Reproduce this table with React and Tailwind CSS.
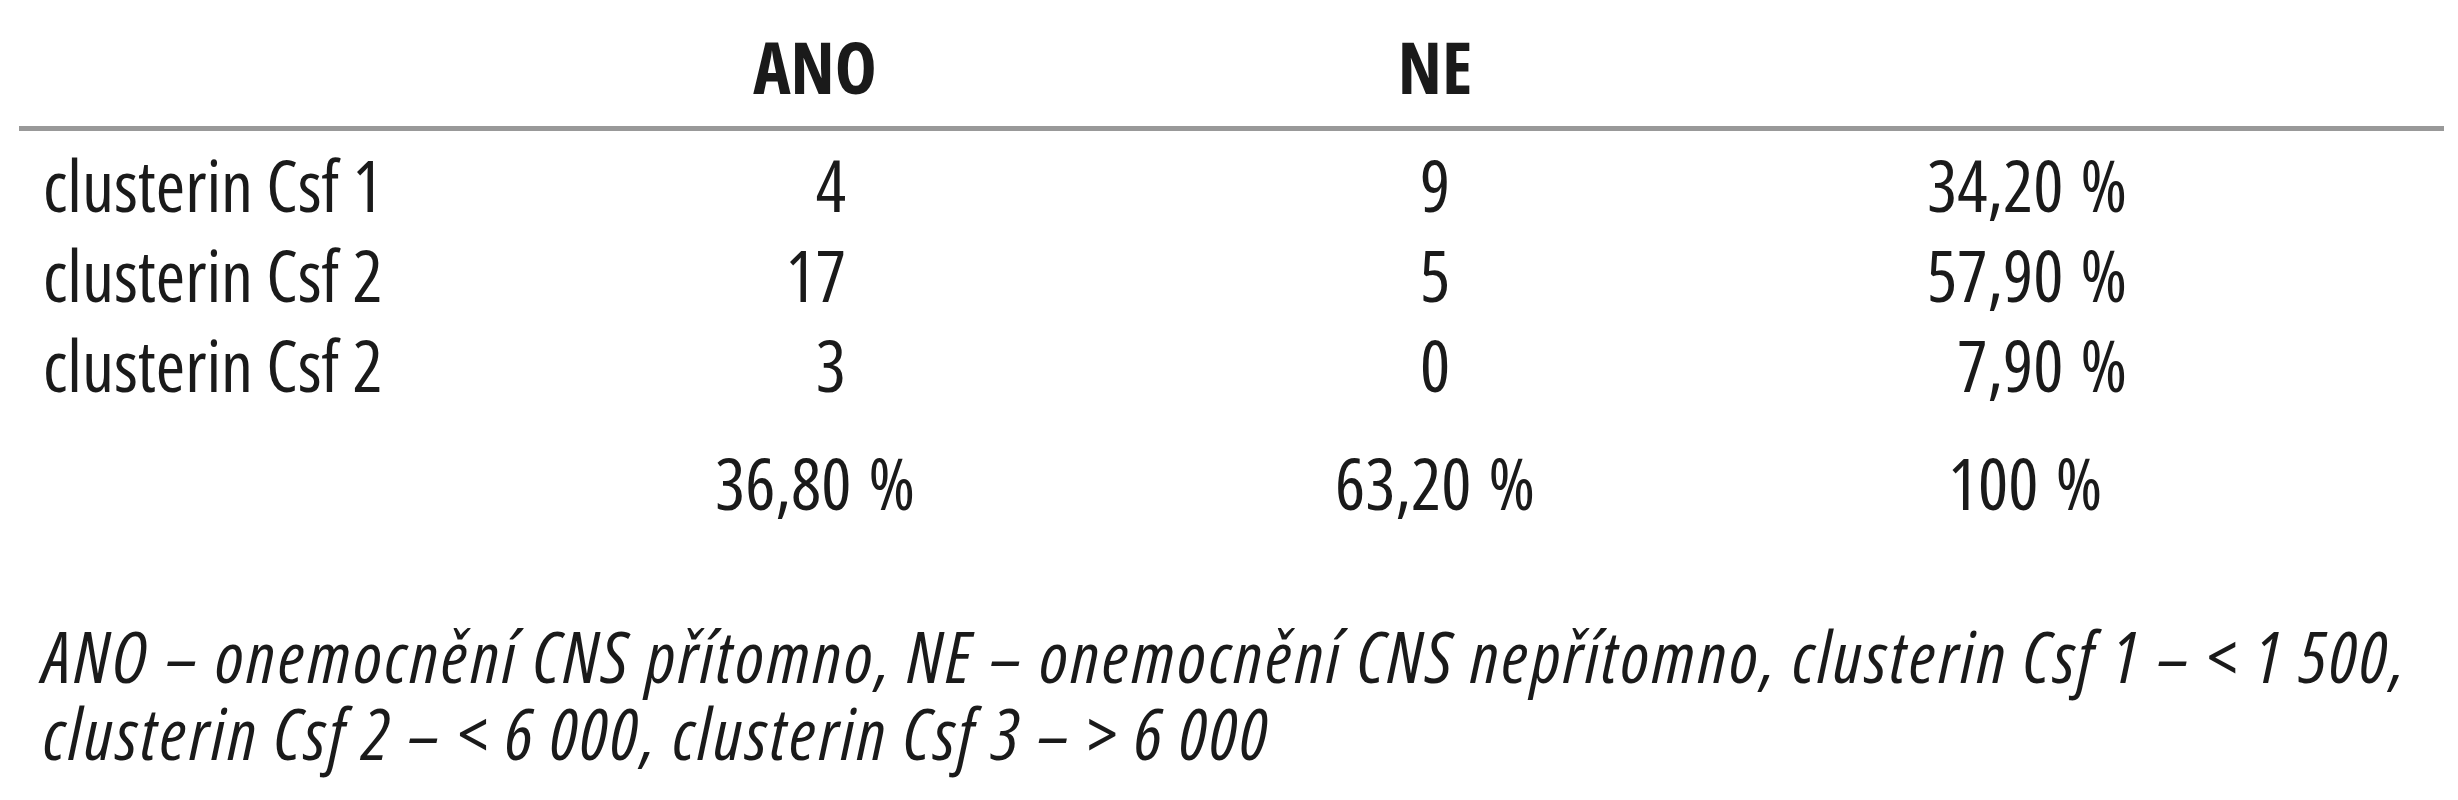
const rows = [
  ["clusterin Csf 1", "4", "9", "34,20"],
  ["clusterin Csf 2", "17", "5", "57,90"],
  ["clusterin Csf 2", "3", "0", "7,90"],
];

function Pct({ v }) {
  return (
    <>
      {v} <span className="ml-[4px]">%</span>
    </>
  );
}

export default function App() {
  return (
    <div className="w-[2458px] h-[800px] bg-white text-[#1a1a1a] text-[71px] overflow-hidden font-['Open_Sans','Noto_Sans',sans-serif] [font-stretch:75%]">
      <div className="ml-[19px] w-[2425px]">
        <div className="grid grid-cols-[681px_230px_620px_590px] pt-[22px] leading-[90px] font-bold">
          <div />
          <div className="text-center">ANO</div>
          <div className="pl-[390px] text-center">NE</div>
          <div />
        </div>
        <div className="mt-[14px] h-[5px] bg-[#999999]" />
        <div className="mt-[9px] leading-[90px]">
          {rows.map((r, i) => (
            <div key={i} className="grid grid-cols-[681px_230px_620px_590px]">
              <div className="pl-[24px]">{r[0]}</div>
              <div className="text-right pr-[84px]">{r[1]}</div>
              <div className="pl-[390px] text-center">{r[2]}</div>
              <div className="pl-[340px] pr-[13px] text-right">
                <Pct v={r[3]} />
              </div>
            </div>
          ))}
          <div className="mt-[28px] grid grid-cols-[681px_230px_620px_590px]">
            <div />
            <div className="text-center">
              <Pct v="36,80" />
            </div>
            <div className="pl-[390px] text-center">
              <Pct v="63,20" />
            </div>
            <div className="pl-[360px] text-center">
              <Pct v="100" />
            </div>
          </div>
        </div>
      </div>
      <p className="mt-[89px] ml-[43px] italic leading-[77px] whitespace-nowrap tracking-[2.8px]">
        ANO – onemocnění CNS přítomno, NE – onemocnění CNS nepřítomno, clusterin Csf 1 – &lt; 1 500,
        <br />
        clusterin Csf 2 – &lt; 6 000, clusterin Csf 3 – &gt; 6 000
      </p>
    </div>
  );
}
